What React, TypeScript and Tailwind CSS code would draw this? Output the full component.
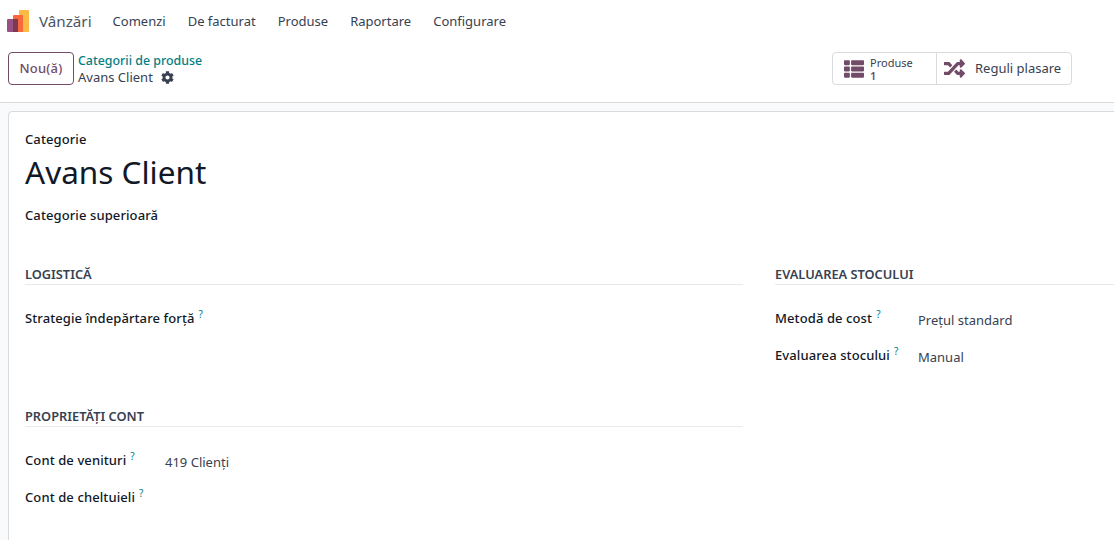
import { FaCog, FaRandom, FaThList } from 'react-icons/fa';

const topMenu = ['Comenzi', 'De facturat', 'Produse', 'Raportare', 'Configurare'];

function Help() {
  return <sup className="ml-[4px] top-[-5px] relative align-baseline text-[10px] leading-none font-normal tracking-normal text-[#017e84]">?</sup>;
}

function Section({ title }: { title: string }) {
  return (
    <div className="h-[20px] border-b border-[#e7e9ed] text-[12.8px] leading-[19px] font-semibold text-[#374151] uppercase">
      {title}
    </div>
  );
}

function Field({ label, value, labelWidth, mb }: { label: string; value?: string; labelWidth: string; mb: string }) {
  return (
    <div className={`flex items-start ${mb}`}>
      <div className={`${labelWidth} text-[13px] leading-[20px] font-medium tracking-[0.1px] text-[#111827]`}>
        {label}
        <Help />
      </div>
      {value && <div className="pt-[2px] text-[13px] leading-[20px] text-[#374151]">{value}</div>}
    </div>
  );
}

export default function App() {
  return (
    <div className="flex h-[540px] w-[1114px] flex-col overflow-hidden bg-white font-['Noto_Sans',sans-serif] text-[13px] text-[#374151]">
      <nav className="flex h-[42px] shrink-0 items-center pt-[1px]">
        <svg className="ml-[7px] h-[23px] w-[22px]" viewBox="0 0 22 23">
          <rect x="12" y="0" width="10" height="22" rx="1" fill="#fbb945" />
          <rect x="6" y="5" width="10" height="17" rx="1" fill="#f9683a" />
          <rect x="0" y="9" width="11" height="13" rx="1" fill="#985184" />
          <rect x="6" y="9" width="5" height="13" fill="#7a3a52" />
        </svg>
        <span className="ml-[10px] text-[15.2px] text-[#4b5563]">Vânzări</span>
        <div className="ml-[21px] flex gap-[22px]">
          {topMenu.map((item) => (
            <span key={item} className="text-[13px] text-[#374151]">
              {item}
            </span>
          ))}
        </div>
      </nav>

      <div className="flex h-[61px] shrink-0 items-start border-b border-[#d8dadd] pt-[10px] pl-[8px]">
        <button type="button" className="h-[33px] w-[66px] rounded-[4px] border border-[#714b67] text-[13px] font-medium tracking-[0.2px] text-[#714b67]">
          Nou(ă)
        </button>
        <div className="ml-[4px] w-[126px] leading-[17px]">
          <div className="text-[12.4px] font-medium whitespace-nowrap text-[#017e84]">Categorii de produse</div>
          <div className="flex items-center gap-[8px]">
            Avans Client
            <FaCog className="h-[13px] w-[13px] text-[#374151]" />
          </div>
        </div>
        <div className="ml-[628px] flex h-[33px] w-[240px] rounded-[4px] border border-[#d8dadd]">
          <div className="flex w-[104px] items-center border-r border-[#d8dadd] pl-[10px]">
            <FaThList className="h-[20px] w-[22px] text-[#714b67]" />
            <div className="ml-[5px] text-[11px] leading-[13px]">
              <div>Produse</div>
              <div className="font-semibold text-[#714b67]">1</div>
            </div>
          </div>
          <div className="flex items-center pl-[6px]">
            <FaRandom className="h-[21px] w-[23px] text-[#714b67]" />
            <span className="ml-[9px]">Reguli plasare</span>
          </div>
        </div>
      </div>

      <div className="flex-1 bg-[#f9fafb] pt-[8px] pl-[8px]">
        <div className="h-[440px] w-[1120px] rounded-[4px] border border-[#d8dadd] bg-white pt-[17px] pl-[16px]">
          <div className="text-[13px] leading-[20px] font-medium tracking-[0.1px] text-[#111827]">Categorie</div>
          <h1 className="text-[31.5px] leading-[46px] text-[#111827]">Avans Client</h1>
          <div className="mt-[10px] text-[13px] leading-[20px] font-medium tracking-[0.1px] text-[#111827]">Categorie superioară</div>

          <div className="mt-[40px] flex">
            <div className="w-[718px]">
              <Section title="Logistică" />
              <div className="pt-[23px]">
                <Field label="Strategie îndepărtare forță" labelWidth="w-[300px]" mb="mb-[79px]" />
              </div>
              <Section title="Proprietăți cont" />
              <div className="pt-[23px]">
                <Field label="Cont de venituri" value="419 Clienți" labelWidth="w-[140px]" mb="mb-[15px]" />
                <Field label="Cont de cheltuieli" labelWidth="w-[140px]" mb="mb-0" />
              </div>
            </div>
            <div className="ml-[32px] flex-1">
              <Section title="Evaluarea stocului" />
              <div className="pt-[23px]">
                <Field label="Metodă de cost" value="Prețul standard" labelWidth="w-[143px]" mb="mb-[15px]" />
                <Field label="Evaluarea stocului" value="Manual" labelWidth="w-[143px]" mb="mb-0" />
              </div>
            </div>
          </div>
        </div>
      </div>
    </div>
  );
}
